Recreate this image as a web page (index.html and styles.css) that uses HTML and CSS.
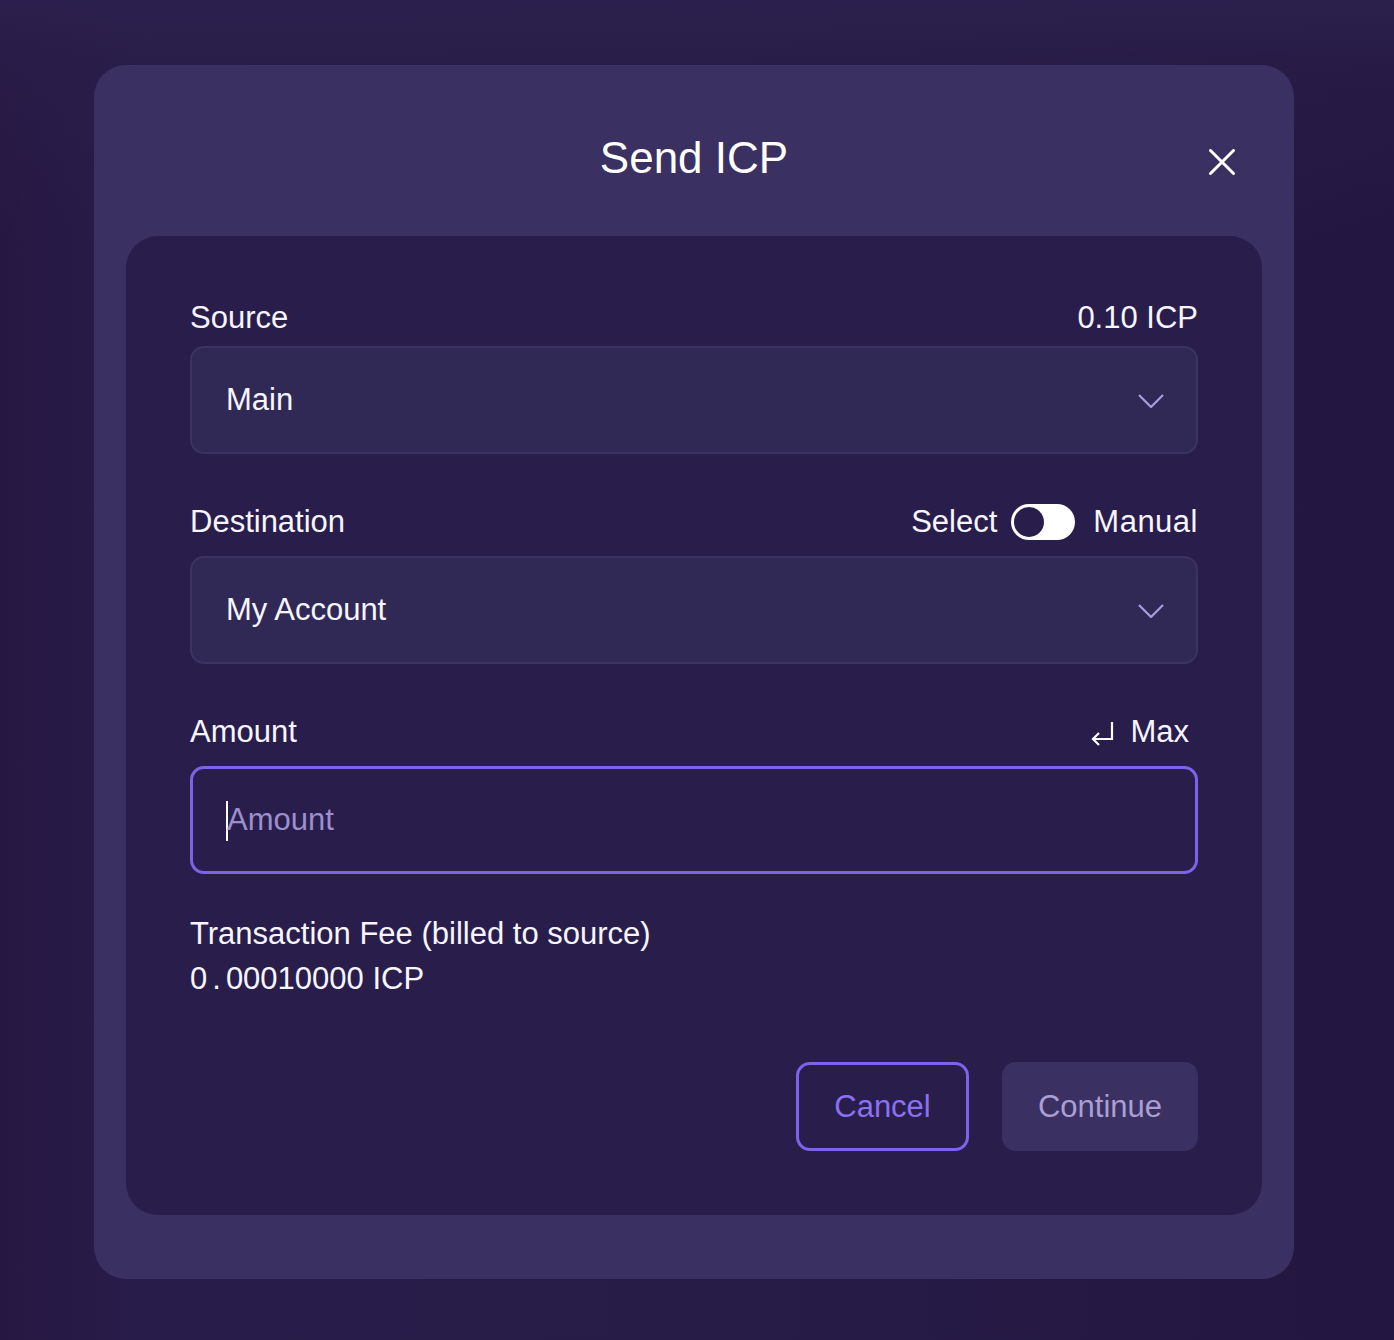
FILE: index.html
```html
<!DOCTYPE html>
<html lang="en">
<head>
<meta charset="utf-8">
<title>Send ICP</title>
<link rel="stylesheet" href="styles.css">
</head>
<body>
<div class="backdrop">
  <div class="modal">
    <div class="modal-header">
      <span></span>
      <h1 class="title">Send ICP</h1>
      <button class="close" aria-label="Close">
        <svg width="26" height="26" viewBox="0 0 26 26"><path d="M1.5 1.5 L24.5 24.5 M24.5 1.5 L1.5 24.5" stroke="#fff" stroke-width="3" stroke-linecap="round" fill="none"/></svg>
      </button>
    </div>
    <div class="card">
      <div class="field">
        <div class="field-head field-head--tight">
          <span>Source</span>
          <span>0.10 ICP</span>
        </div>
        <div class="select">
          <span>Main</span>
          <svg class="chev" width="26" height="14" viewBox="0 0 26 14"><path d="M1 1 L13 13 L25 1" stroke="#a99be0" stroke-width="2.2" fill="none"/></svg>
        </div>
      </div>
      <div class="field">
        <div class="field-head">
          <span>Destination</span>
          <div class="switch-group">
            <span>Select</span>
            <span class="toggle"><span class="knob"></span></span>
            <span class="manual">Manual</span>
          </div>
        </div>
        <div class="select">
          <span>My Account</span>
          <svg class="chev" width="26" height="14" viewBox="0 0 26 14"><path d="M1 1 L13 13 L25 1" stroke="#a99be0" stroke-width="2.2" fill="none"/></svg>
        </div>
      </div>
      <div class="field">
        <div class="field-head">
          <span>Amount</span>
          <div class="max">
            <svg width="26" height="26" viewBox="0 0 26 26"><path d="M22 2 V19 H3 M9 13 L3 19 L9 25" stroke="#fff" stroke-width="2.2" fill="none" stroke-linejoin="miter"/></svg>
            <span>Max</span>
          </div>
        </div>
        <div class="input">
          <span class="caret"></span><span class="placeholder">Amount</span>
        </div>
      </div>
      <div class="fee">
        <p>Transaction Fee (billed to source)</p>
        <p>0<span class="dot">.</span>00010000 ICP</p>
      </div>
      <div class="actions">
        <button class="btn btn-secondary">Cancel</button>
        <button class="btn btn-primary" disabled>Continue</button>
      </div>
    </div>
  </div>
</div>
</body>
</html>
```
FILE: styles.css
```css
* { box-sizing: border-box; }
html, body { margin: 0; padding: 0; }
body {
  width: 1394px;
  height: 1340px;
  overflow: hidden;
  font-family: "Liberation Sans", Arial, sans-serif;
  color: #f7f5ff;
  background:
    linear-gradient(180deg, rgba(44,32,78,0.9) 0px, rgba(42,30,74,0.6) 60px, rgba(36,22,64,0) 240px),
    linear-gradient(90deg, #261742 0%, #281c4a 10%, #271c48 50%, #231741 100%);
}
.backdrop {
  display: flex;
  justify-content: flex-start;
  padding: 65px 0 0 94px;
}
.modal {
  width: 1200px;
  background: #3a3062;
  border-radius: 32px;
  padding: 0 32px 64px;
}
.modal-header {
  display: grid;
  grid-template-columns: 1fr auto 1fr;
  align-items: center;
  height: 171px;
  padding-top: 15px;
}
.title {
  margin: 0;
  font-size: 44px;
  font-weight: 400;
  line-height: 52px;
  color: #fff;
}
.close {
  justify-self: end;
  margin-right: 27px;
  margin-top: 8px;
  background: none;
  border: 0;
  padding: 0;
  width: 26px;
  height: 26px;
  display: flex;
}
.card {
  background: #291e4b;
  border-radius: 32px;
  padding: 64px 64px 64px;
  font-size: 31px;
}
.field { margin-bottom: 48px; }
.field:nth-child(3) { margin-bottom: 0; }
.field-head {
  display: flex;
  justify-content: space-between;
  align-items: center;
  height: 36px;
  margin-bottom: 18px;
  line-height: 36px;
}
.field:nth-child(2) .field-head { padding-top: 3px; }
.field:nth-child(3) .field-head { padding-top: 4px; }
.field-head--tight { margin-bottom: 10px; }
.select {
  height: 108px;
  background: #312955;
  border: 2px solid #3b3363;
  border-radius: 14px;
  display: flex;
  align-items: center;
  justify-content: space-between;
  padding: 0 32px 0 34px;
}
.chev { margin-top: 2px; }
.switch-group {
  display: flex;
  align-items: center;
  gap: 14px;
}
.manual {
  margin-left: 4px;
  letter-spacing: 0.5px;
}
.toggle {
  width: 64px;
  height: 36px;
  border-radius: 18px;
  background: #fff;
  display: flex;
  align-items: center;
  padding-left: 3px;
}
.knob {
  width: 30px;
  height: 30px;
  border-radius: 50%;
  background: #291e4b;
}
.max {
  display: flex;
  align-items: center;
  gap: 14px;
  padding-right: 9px;
}
.max svg { margin-top: 2px; }
.input {
  height: 108px;
  border: 3px solid #7b63ea;
  border-radius: 14px;
  display: flex;
  align-items: center;
  padding-left: 33px;
}
.caret {
  width: 2px;
  height: 40px;
  background: #fff;
  margin-top: 2px;
}
.placeholder {
  color: #9c8fce;
  margin-left: -1px;
}
.fee {
  margin-top: 37px;
  line-height: 45px;
}
.fee p { margin: 0; }
.dot { margin: 0 5px; }
.actions {
  display: flex;
  justify-content: flex-end;
  gap: 33px;
  margin-top: 61px;
}
.btn {
  height: 89px;
  border-radius: 14px;
  font-family: inherit;
  font-size: 31px;
  display: flex;
  align-items: center;
  justify-content: center;
  padding: 0;
}
.btn-secondary {
  width: 173px;
  background: transparent;
  border: 3px solid #7b63ea;
  color: #8a70f2;
}
.btn-primary {
  width: 196px;
  background: #3a3062;
  border: 0;
  color: #aa9fd2;
}
```
